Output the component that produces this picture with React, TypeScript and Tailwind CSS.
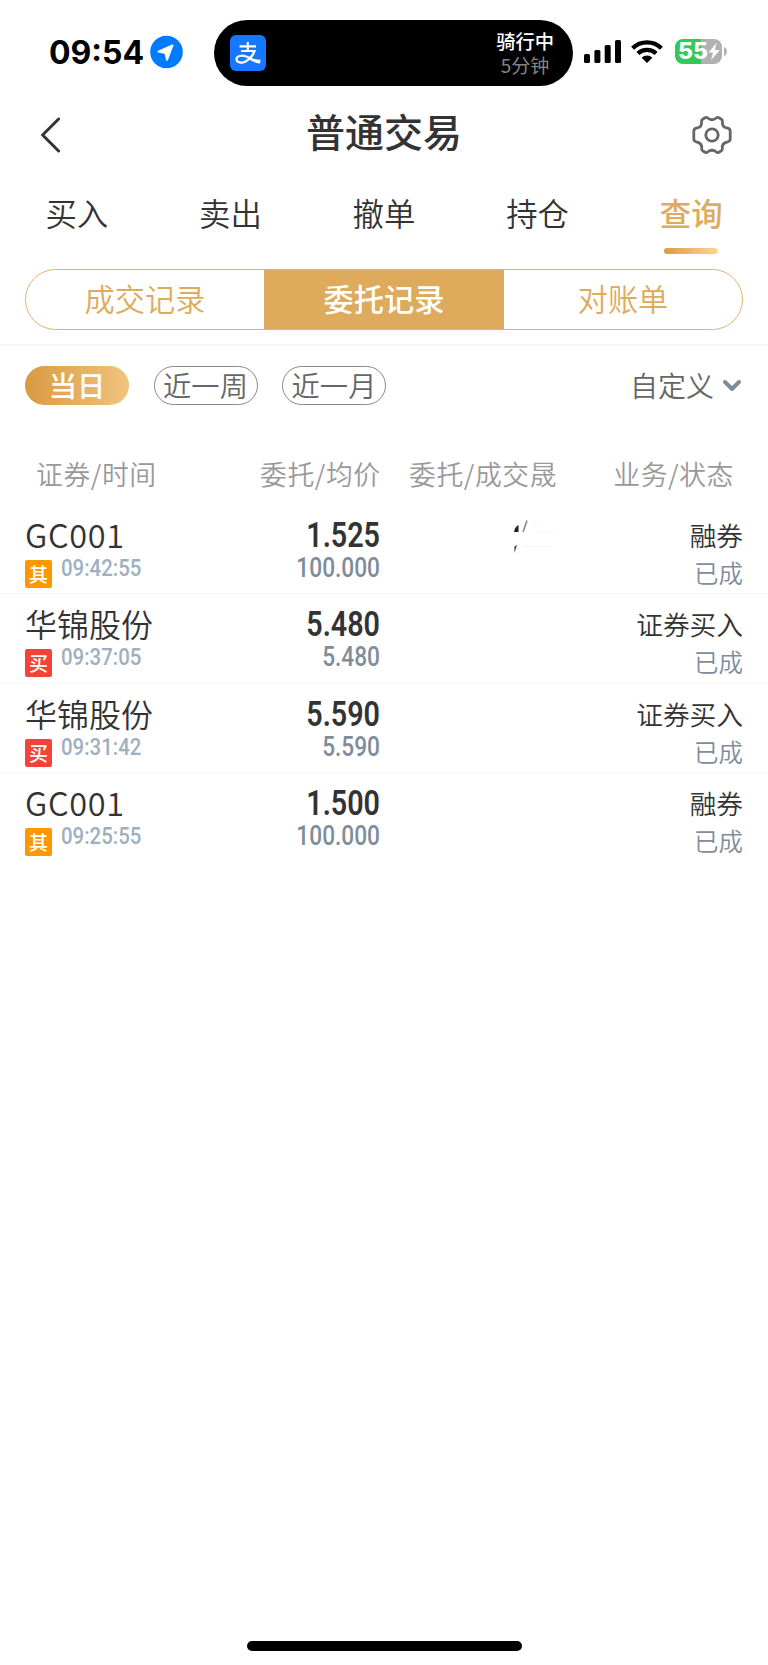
import React from "react";
import { clsx } from "clsx";

interface Order {
  name: string;
  badge: "其" | "买";
  time: string;
  price: string;
  avg: string;
  business: string;
  status: string;
  redacted?: boolean;
}

const TABS = ["买入", "卖出", "撤单", "持仓", "查询"];
const SEGMENTS = ["成交记录", "委托记录", "对账单"];
const RANGES = ["当日", "近一周", "近一月"];

const ORDERS: Order[] = [
  { name: "GC001", badge: "其", time: "09:42:55", price: "1.525", avg: "100.000", business: "融券", status: "已成", redacted: true },
  { name: "华锦股份", badge: "买", time: "09:37:05", price: "5.480", avg: "5.480", business: "证券买入", status: "已成" },
  { name: "华锦股份", badge: "买", time: "09:31:42", price: "5.590", avg: "5.590", business: "证券买入", status: "已成" },
  { name: "GC001", badge: "其", time: "09:25:55", price: "1.500", avg: "100.000", business: "融券", status: "已成" },
];

const StatusBar = () => (
  <div className="flex h-[94px] items-start">
    <div className="mt-[33px] ml-[49px] w-[101px] font-['Inter'] text-[32px] leading-[40px] font-bold text-black">
      09:54
    </div>
    <svg className="mt-[35px] h-[34px] w-[33px]" viewBox="0 0 34 34">
      <circle cx="17" cy="17" r="16.8" fill="#007aff" />
      <path d="M23.2 10.2L17.6 25L15.9 18.2L8.6 16.6Z" fill="#fff" stroke="#fff" strokeWidth="2" strokeLinejoin="round" />
    </svg>
    <div className="mt-[20px] ml-[31px] flex h-[66px] w-[359px] items-center justify-between rounded-full bg-black pr-[19px] pl-[16px]">
      <svg className="h-[36px] w-[36px]" viewBox="0 0 36 36">
        <rect width="36" height="36" rx="6" fill="#1677ff" />
        <path d="M9.5 11.3H26M17.8 7V16M11 16H24.5C23 20 20 24 16 26.2C11 28.8 6.5 27.5 6.5 24.3C6.5 21 11.5 19.8 16 21.5C21 23.3 25 26.5 30 26.5" fill="none" stroke="#fff" strokeWidth="2.2" />
        <path d="M19 22.4C23 23.8 27 25 30.5 24.6L30 28.4C26 28.8 22 26 18 23.8Z" fill="#fff" />
      </svg>
      <div className="flex flex-col items-center">
        <span className="text-[19.3px] leading-[24px] font-medium text-white">骑行中</span>
        <span className="text-[19px] leading-[24px] text-[#858585]">5分钟</span>
      </div>
    </div>
    <svg className="mt-[40px] ml-[11px] h-[23px] w-[37px]" viewBox="0 0 37 23">
      <rect x="0" y="14" width="6" height="9" rx="1.6" />
      <rect x="10.4" y="10" width="6" height="13" rx="1.6" />
      <rect x="20.7" y="5" width="6" height="18" rx="1.6" />
      <rect x="31" y="0" width="6" height="23" rx="1.6" />
    </svg>
    <svg className="mt-[39px] ml-[10px] h-[24px] w-[32px]" viewBox="0 0 32 24">
      <path d="M1.6 9.2A20.6 20.6 0 0 1 30.4 9.2" fill="none" stroke="#000" strokeWidth="4.2" />
      <path d="M6.9 14.6A13.2 13.2 0 0 1 25.1 14.6" fill="none" stroke="#000" strokeWidth="4.2" />
      <path d="M16 24L10.6 18.7A7.8 7.8 0 0 1 21.4 18.7Z" />
    </svg>
    <div className="mt-[39px] ml-[12px] flex h-[25px] w-[47px] items-center rounded-[8px] bg-linear-to-r from-[#34c759] from-55% to-[#b1b1b1] to-55% pl-[3px]">
      <span className="font-['Inter'] text-[23px] leading-[25px] font-extrabold text-white">55</span>
      <svg className="h-[17px] w-[12px]" viewBox="0 0 12 17">
        <path d="M8.5 0L0.5 9.6H5L3.2 17L11.8 7H7Z" fill="#fff" />
      </svg>
    </div>
    <svg className="mt-[47px] ml-[2px] h-[9px] w-[3px]" viewBox="0 0 3 9">
      <path d="M0 0C4 1.5 4 7.5 0 9Z" fill="#b1b1b1" />
    </svg>
  </div>
);

const TitleBar = () => (
  <div className="flex h-[84px] items-center justify-between pr-[36px] pb-[2px] pl-[40px]">
    <svg className="h-[36px] w-[36px]" viewBox="0 0 36 36" fill="none" stroke="#333" strokeWidth="3" strokeLinecap="round" strokeLinejoin="round">
      <path d="M18.6 2L2.6 18L18.6 34" />
    </svg>
    <h1 className="pb-[10px] text-[39px] leading-[48px] font-medium text-[#333]">普通交易</h1>
    <svg className="h-[40px] w-[40px]" viewBox="0 0 40 40" fill="none" stroke="#666" strokeWidth="2.8" strokeLinejoin="round">
      <circle cx="20" cy="20" r="6.2" />
      <path d="M10.6 4.2L13 2.8Q14.5 2 15.6 3Q20 6.6 24.4 3Q25.5 2 27 2.8L29.4 4.2Q30.8 5 30.4 6.8Q29.6 12 35.6 13.2Q38.2 13.8 38.2 16V24Q38.2 26.2 35.6 26.8Q29.6 28 30.4 33.2Q30.8 35 29.4 35.8L27 37.2Q25.5 38 24.4 37Q20 33.4 15.6 37Q14.5 38 13 37.2L10.6 35.8Q9.2 35 9.6 33.2Q10.4 28 4.4 26.8Q1.8 26.2 1.8 24V16Q1.8 13.8 4.4 13.2Q10.4 12 9.6 6.8Q9.2 5 10.6 4.2Z" />
    </svg>
  </div>
);

const Tabs = () => (
  <div className="grid h-[91px] grid-cols-5">
    {TABS.map((tab) => (
      <div key={tab} className={clsx("flex flex-col items-center pt-[12px]", tab === "查询" ? "font-medium text-[#deaa5c]" : "font-[350] text-[#333]")}>
        <span className="text-[31.4px] leading-[46px]">{tab}</span>
        {tab === "查询" && <div className="mt-[12px] h-[6px] w-[54px] rounded-full bg-linear-to-r from-[#dc9c41] to-[#fdd596]" />}
      </div>
    ))}
  </div>
);

const Segments = () => (
  <div className="mx-[25px] grid h-[61px] grid-cols-[238px_240px_238px] overflow-hidden rounded-full border border-[#e3b368]">
    {SEGMENTS.map((item) => (
      <div
        key={item}
        className={clsx(
          "flex items-center justify-center pb-[3px] text-[30.2px] leading-[44px]",
          item === "委托记录" ? "bg-[#deaa5c] font-medium text-white" : "font-[350] text-[#deaa5c]"
        )}
      >
        {item}
      </div>
    ))}
  </div>
);

const Filters = () => (
  <div className="flex h-[39px] items-center gap-[24.5px] px-[25px]">
    {RANGES.map((range) => (
      <div
        key={range}
        className={clsx(
          "flex h-[39px] w-[104px] items-center justify-center rounded-full pb-[1px] text-[28.3px] leading-[36px] whitespace-nowrap",
          range === "当日"
            ? "bg-linear-to-r from-[#d99a3f] to-[#f0c47e] font-medium text-white"
            : "border border-[#888] font-[350] text-[#666]"
        )}
      >
        {range}
      </div>
    ))}
    <div className="ml-auto flex items-center gap-[8px]">
      <span className="text-[28px] leading-[39px] font-[350] text-[#666]">自定义</span>
      <svg className="mr-[1px] h-[13px] w-[20px]" viewBox="0 0 20 13" fill="none" stroke="#7f8c9c" strokeWidth="4" strokeLinecap="round" strokeLinejoin="round">
        <path d="M3 3L10 10L17 3" />
      </svg>
    </div>
  </div>
);

const Numeric = ({ className, children }: { className: string; children: React.ReactNode }) => (
  <span className={clsx("block font-['Roboto']", className)}>{children}</span>
);

// Leftovers of the hidden quantity
const RedactedMarks = () => (
  <svg className="mt-[14px] ml-[132px] h-[36px] w-[48px]" viewBox="0 0 48 36">
    <path d="M2 13C2.5 9 4.5 7 6.5 6V13Z" fill="#222" />
    <path d="M11 13L15 1.5" stroke="#888" strokeWidth="1.6" />
    <path d="M2.4 34V27.5L5 26C4 29 3.2 32 2.4 34Z" fill="#444" />
    <path d="M20 5H26M24 13H43M10 27.5H39" stroke="#f5f5f5" strokeWidth="1" />
  </svg>
);

const OrderRow = ({ order }: { order: Order }) => (
  <div className="grid h-[89.3px] grid-cols-[200px_155px_179px_1fr] border-b border-[#f5f5f5] px-[25px] last:border-0">
    <div className="pt-[7px]">
      <div
        className={clsx(
          "leading-[44px] font-[350] whitespace-nowrap text-[#333]",
          order.name === "GC001" ? "text-[32.5px] tracking-[0.7px]" : "text-[32px]"
        )}
      >
        {order.name}
      </div>
      <div className="flex">
        <div
          className={clsx(
            "mt-[4px] flex h-[28px] w-[27px] items-center justify-center rounded-[2px] pb-[1px] text-[19px] leading-[27px] font-medium text-white",
            order.badge === "其" ? "bg-[#ff9800]" : "bg-[#f44336]"
          )}
        >
          {order.badge}
        </div>
        <Numeric className="ml-[9px] origin-left scale-x-[0.85] text-[24px] leading-[24px] font-medium text-[#9fafbf]">{order.time}</Numeric>
      </div>
    </div>
    <div className="pt-[12px] text-right">
      <Numeric className="origin-right scale-x-[0.82] text-[35px] leading-[37px] font-semibold text-[#333]">{order.price}</Numeric>
      <Numeric className="origin-right scale-x-[0.81] text-[28px] leading-[28px] font-medium text-[#7f8c9b]">{order.avg}</Numeric>
    </div>
    <div>{order.redacted && <RedactedMarks />}</div>
    <div className="pt-[11px] text-right font-[350]">
      <div className="text-[26.7px] leading-[38px] text-[#333]">{order.business}</div>
      <div className="text-[24.5px] leading-[37px] text-[#7f8c9b]">{order.status}</div>
    </div>
  </div>
);

const App: React.FC = () => {
  return (
    <div className="flex h-[1665px] w-[768px] flex-col bg-white font-['Noto_Sans_CJK_SC',sans-serif]">
      <StatusBar />
      <TitleBar />
      <Tabs />
      <Segments />
      <div className="mt-[14px] mb-[20px] h-[2px] shrink-0 bg-[#f6f6f8]" />
      <Filters />

      {/* Column titles */}
      <div className="mt-[49px] flex h-[39px] items-center pr-[34px] pl-[36px] text-[26.8px] leading-[39px] font-[350] tracking-[0.6px] whitespace-nowrap text-[#999]">
        <span className="w-[224px]">证券/时间</span>
        <span className="w-[149px]">委托/均价</span>
        <span>委托/成交晟</span>
        <span className="ml-auto">业务/状态</span>
      </div>

      <div className="mt-[12px]">
        {ORDERS.map((order) => (
          <OrderRow key={order.time} order={order} />
        ))}
      </div>

      <div className="mx-auto mt-auto mb-[14px] h-[10px] w-[275px] rounded-full bg-black" />
    </div>
  );
};

export default App;
